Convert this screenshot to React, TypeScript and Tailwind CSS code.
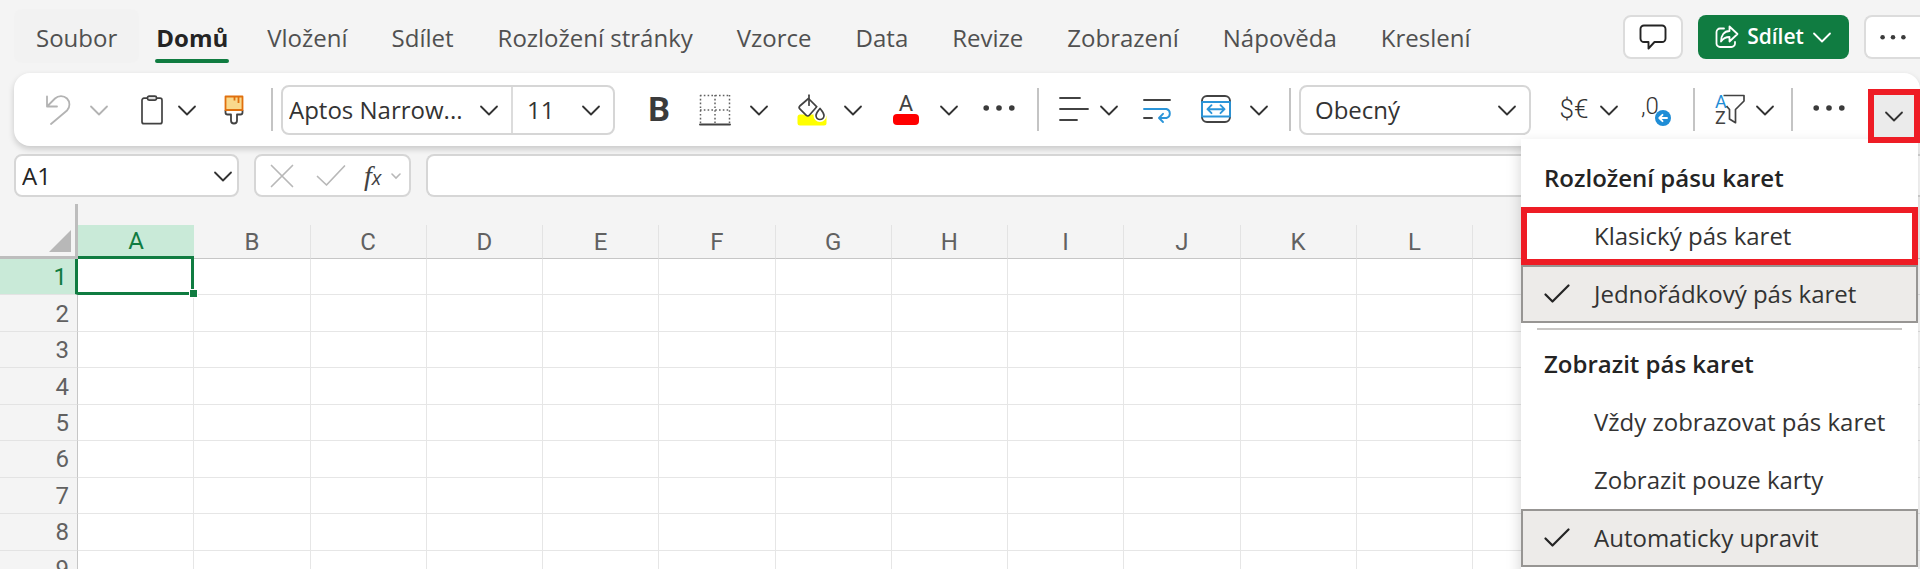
import React, { useState } from 'react';
import clsx from 'clsx';

interface IconProps {
  className?: string;
}

const tabs = [
  'Soubor',
  'Domů',
  'Vložení',
  'Sdílet',
  'Rozložení stránky',
  'Vzorce',
  'Data',
  'Revize',
  'Zobrazení',
  'Nápověda',
  'Kreslení',
];

const columns = 'ABCDEFGHIJKLMNOP'.split('');
const rows = [1, 2, 3, 4, 5, 6, 7, 8, 9];

const layoutOptions = ['Klasický pás karet', 'Jednořádkový pás karet'];
const displayOptions = ['Vždy zobrazovat pás karet', 'Zobrazit pouze karty', 'Automaticky upravit'];

function Chevron({ className = 'text-[#333333]' }: IconProps) {
  return (
    <svg viewBox="0 0 20 20" className={clsx('h-5 w-5 shrink-0', className)} fill="none" stroke="currentColor" strokeWidth="1.8" strokeLinecap="round" strokeLinejoin="round">
      <path d="M2 6.5l8 8 8-8" />
    </svg>
  );
}

function Dots({ className = 'w-8' }: IconProps) {
  return (
    <svg viewBox="0 0 32 8" className={clsx('shrink-0', className)} fill="#3b3b3b">
      <circle cx="3.2" cy="4" r="2.8" />
      <circle cx="16" cy="4" r="2.8" />
      <circle cx="28.8" cy="4" r="2.8" />
    </svg>
  );
}

function UndoIcon() {
  return (
    <svg viewBox="0 0 30 30" className="h-[30px] w-[30px]" fill="none" stroke="#b3b3b3" strokeWidth="1.8" strokeLinecap="round" strokeLinejoin="round">
      <path d="M4 1.5v10h10M4.5 11L12 3.5a8.6 8.6 0 0 1 12 0a8.6 8.6 0 0 1 0 12L8 29" />
    </svg>
  );
}

function ClipboardIcon() {
  return (
    <svg viewBox="0 0 30 30" className="h-[30px] w-[30px]" fill="none" stroke="#424242" strokeWidth="1.7" strokeLinejoin="round">
      <path d="M10.5 3.2H7a2 2 0 0 0-2 2v21.5a2 2 0 0 0 2 2h16a2 2 0 0 0 2-2V5.2a2 2 0 0 0-2-2h-3.5" />
      <rect x="10.5" y="1.2" width="9" height="4" rx="1.6" fill="#e0e0e0" />
    </svg>
  );
}

function BrushIcon() {
  return (
    <svg viewBox="0 0 30 30" className="h-[30px] w-[30px]" fill="none" strokeWidth="1.8" strokeLinejoin="round">
      <path d="M6.5 15v2.500a2 2 0 0 0 2 2H12v6a3 3 0 0 0 6 0v-6h3.500a2 2 0 0 0 2-2V15" stroke="#424242" />
      <path d="M6.5 1.500h17v13.500h-17z" fill="#f9d98c" stroke="#e0700e" />
      <path d="M15.5 1.500v4M19.500 1.500v6.500" stroke="#e0700e" />
    </svg>
  );
}

function BordersIcon() {
  return (
    <svg viewBox="0 0 32 32" className="h-8 w-8" fill="none" stroke="#616161" strokeWidth="1.5">
      <path d="M1 1.500h30M1 16h30M1.500 1v28M16 1v28M30.500 1v28" strokeDasharray="1.6 2.2" />
      <path d="M1 30.500h30" stroke="#424242" strokeWidth="1.9" strokeLinecap="round" />
    </svg>
  );
}

function FillIcon() {
  return (
    <svg viewBox="0 0 30 32" className="h-8 w-[30px]" fill="none" stroke="#424242" strokeWidth="1.7" strokeLinecap="round" strokeLinejoin="round">
      <rect x="0.5" y="20.5" width="29" height="11" rx="2.5" fill="#ffff00" stroke="none" />
      <path d="M11.500 4.500l8.300 8.300-7.500 8.500a2 2 0 0 1-3 0l-6.500-6.500a2 2 0 0 1 0-2.800z" fill="#ffffff" />
      <path d="M12 1.200v10" />
      <path d="M23 14.500c2 2.600 4 4.600 4 7a4 4 0 0 1-8 0c0-2.400 2-4.400 4-7z" fill="#ffffff" stroke="#ffffff" strokeWidth="5" />
      <path d="M23 14.500c2 2.600 4 4.600 4 7a4 4 0 0 1-8 0c0-2.400 2-4.400 4-7z" fill="#ffffff" />
    </svg>
  );
}

function AlignIcon() {
  return (
    <svg viewBox="0 0 30 30" className="h-[30px] w-[30px]" fill="none" stroke="#424242" strokeWidth="1.8" strokeLinecap="round">
      <path d="M1 3h20M1 14h28M1 25h17" />
    </svg>
  );
}

function WrapIcon() {
  return (
    <svg viewBox="0 0 30 30" className="h-[30px] w-[30px]" fill="none" stroke="#424242" strokeWidth="1.9" strokeLinecap="round" strokeLinejoin="round">
      <path d="M1 5h26M1 23h8" />
      <path d="M1 14h22.500a4.700 4.700 0 0 1 0 9H16.500M20 18.800L16 23l4 4" stroke="#2b95d9" />
    </svg>
  );
}

function MergeIcon() {
  return (
    <svg viewBox="0 0 30 30" className="h-[30px] w-[30px]" fill="none" stroke="#424242" strokeWidth="1.9" strokeLinecap="round" strokeLinejoin="round">
      <rect x="1" y="1" width="28" height="26" rx="5" />
      <path d="M1 7h28v14.500H1zM6.500 14.200h17M10.500 10.200l-4 4 4 4M19.500 10.200l4 4-4 4" stroke="#2b95d9" />
    </svg>
  );
}

function DecimalIcon() {
  return (
    <span className="flex h-8 w-8 items-start">
      <span className="font-['Roboto',sans-serif] text-2xl leading-6 font-light text-[#333333]">,0</span>
      <svg viewBox="0 0 16 16" className="-ml-1 h-4 w-4 shrink-0 self-end" fill="none" stroke="#ffffff" strokeWidth="1.9" strokeLinecap="round" strokeLinejoin="round">
        <circle cx="8" cy="8" r="8" fill="#1f8dd6" stroke="none" />
        <path d="M12 8H4.500M7.500 4.800L4.300 8l3.200 3.200" />
      </svg>
    </span>
  );
}

function SortFilterIcon() {
  return (
    <span className="flex h-8 w-[30px] items-start">
      <span className="flex w-2 flex-col font-['Roboto',sans-serif] text-lg leading-4">
        <span className="text-[#1f8dd6]">A</span>
        <span className="text-[#424242]">Z</span>
      </span>
      <svg viewBox="0 0 22 30" className="h-[30px] w-[22px] shrink-0" fill="none" stroke="#424242" strokeWidth="1.7" strokeLinejoin="round">
        <path d="M0.500 1.500h20.500v5.500l-8.500 8.500v13.200l-6-3.700v-9.500L3.500 12" />
      </svg>
    </span>
  );
}

function CommentIcon() {
  return (
    <svg viewBox="0 0 28 28" className="h-7 w-7" fill="none" stroke="#242424" strokeWidth="1.9" strokeLinejoin="round">
      <path d="M5 2.500h18a3.500 3.500 0 0 1 3.500 3.500v9.500a3.500 3.500 0 0 1-3.500 3.500h-7.500l-6 6.500v-6.500H5a3.500 3.500 0 0 1-3.500-3.500V6A3.500 3.500 0 0 1 5 2.500z" />
    </svg>
  );
}

function ShareIcon() {
  return (
    <svg viewBox="0 0 24 24" className="h-6 w-6" fill="none" stroke="#ffffff" strokeWidth="1.8" strokeLinecap="round" strokeLinejoin="round">
      <path d="M9 3.500H5A3.500 3.500 0 0 0 1.500 7v11.500A3.500 3.500 0 0 0 5 22h11.500a3.500 3.500 0 0 0 3.500-3.500V17" />
      <path d="M14.500 1.500l8 7.500-8 7.500v-4.500c-4 0-6.500 1.500-8.500 4.500 0-6 3-10.500 8.500-10.500z" />
    </svg>
  );
}

function CheckIcon() {
  return (
    <svg viewBox="0 0 26 20" className="h-5 w-[26px]" fill="none" stroke="#242424" strokeWidth="2.2" strokeLinecap="round" strokeLinejoin="round">
      <path d="M1.500 10.500l7 7L24.500 1.500" />
    </svg>
  );
}

function Divider({ className }: IconProps) {
  return <div className={clsx('h-[43px] w-0.5 shrink-0 bg-[#c4c4c4]', className)} />;
}

interface ToolProps {
  label: string;
  className?: string;
  disabled?: boolean;
  children: React.ReactNode;
}

function Tool({ label, className, disabled, children }: ToolProps) {
  return (
    <button aria-label={label} disabled={disabled} className={clsx('flex h-12 shrink-0 items-center', className)}>
      {children}
    </button>
  );
}

interface PickerProps {
  label: string;
  options: string[];
  className?: string;
  selectClassName?: string;
}

function Picker({ label, options, className, selectClassName }: PickerProps) {
  return (
    <div className={clsx('relative h-full', className)}>
      <select aria-label={label} className={clsx('h-full w-full appearance-none bg-transparent text-2xl text-[#333333]', selectClassName)}>
        {options.map((option) => (
          <option key={option}>{option}</option>
        ))}
      </select>
      <div className="pointer-events-none absolute inset-y-0 right-3 flex items-center">
        <Chevron />
      </div>
    </div>
  );
}

function TopBar() {
  const [activeTab, setActiveTab] = useState('Domů');

  return (
    <header className="flex h-[73px] items-start justify-between pl-[14px]">
      <nav className="flex pt-[9px]">
        {tabs.map((tab) => (
          <button
            key={tab}
            onClick={() => setActiveTab(tab)}
            className={clsx(
              'flex h-[54px] flex-col items-center rounded-lg pt-2 text-2xl whitespace-nowrap',
              tab === 'Soubor' && 'bg-[#f2f2f2]',
              activeTab === tab ? 'px-4 font-bold text-[#242424]' : 'px-[22px] text-[#505050]'
            )}
          >
            <span className="leading-[42px]">{tab}</span>
            {activeTab === tab && <span className="h-1 w-[74px] rounded-full bg-[#107c41]" />}
          </button>
        ))}
      </nav>

      <div className="flex shrink-0 pt-[15px]">
        <button aria-label="Komentáře" className="flex h-11 w-[60px] items-center justify-center rounded-lg border-2 border-[#dcdcdc] bg-white">
          <CommentIcon />
        </button>
        <button className="ml-[15px] flex h-11 w-[151px] items-center justify-center gap-2 rounded-lg bg-[#107c41] text-[21px] font-semibold text-white">
          <ShareIcon />
          Sdílet
          <Chevron className="text-white" />
        </button>
        <button aria-label="Další možnosti" className="ml-[15px] flex h-11 w-14 items-center justify-center rounded-l-lg border-2 border-r-0 border-[#dcdcdc] bg-white">
          <Dots className="w-[26px]" />
        </button>
      </div>
    </header>
  );
}

function Ribbon() {
  const [menuOpen, setMenuOpen] = useState(true);

  return (
    <div className="relative z-10 ml-[14px] flex h-[73px] items-center rounded-2xl bg-white pl-[29px] shadow-[0_3px_6px_rgba(0,0,0,0.18)]">
      {/* Clipboard */}
      <Tool label="Zpět" disabled className="gap-4">
        <UndoIcon />
        <Chevron className="text-[#b3b3b3]" />
      </Tool>
      <Tool label="Vložit" className="ml-7 gap-2.5">
        <ClipboardIcon />
        <Chevron />
      </Tool>
      <Tool label="Kopírovat formát" className="ml-[22px]">
        <BrushIcon />
      </Tool>
      <Divider className="ml-[22px]" />

      {/* Font */}
      <div className="ml-2 flex h-[50px] shrink-0 rounded-lg border-2 border-[#d6d6d6]">
        <Picker label="Písmo" options={['Aptos Narrow...']} className="w-[228px]" selectClassName="pl-1.5" />
        <div className="w-0.5 bg-[#dcdcdc]" />
        <Picker label="Velikost písma" options={['11']} className="w-[100px]" selectClassName="pl-3.5" />
      </div>
      <Tool label="Tučné" className="ml-[34px] w-5 justify-center font-['Roboto',sans-serif] text-[34px] font-bold text-[#3b3b3b]">
        B
      </Tool>
      <Tool label="Ohraničení" className="ml-[30px] gap-[18px]">
        <BordersIcon />
        <Chevron />
      </Tool>
      <Tool label="Barva výplně" className="ml-7 gap-4">
        <FillIcon />
        <Chevron />
      </Tool>
      <Tool label="Barva písma" className="ml-7 gap-[18px]">
        <span className="flex w-[30px] flex-col items-center">
          <span className="font-['Roboto',sans-serif] text-[22px] leading-5 text-[#424242]">A</span>
          <span className="h-[11px] w-[26px] rounded-sm bg-[#ff0000]" />
        </span>
        <Chevron />
      </Tool>
      <Tool label="Další možnosti písma" className="ml-6 pb-1">
        <Dots />
      </Tool>
      <Divider className="ml-[22px]" />

      {/* Alignment */}
      <Tool label="Zarovnání" className="ml-5 gap-2.5">
        <AlignIcon />
        <Chevron />
      </Tool>
      <Tool label="Zalamovat text" className="ml-6">
        <WrapIcon />
      </Tool>
      <Tool label="Sloučit buňky" className="ml-7 gap-[18px]">
        <MergeIcon />
        <Chevron />
      </Tool>
      <Divider className="ml-5" />

      {/* Number format */}
      <div className="ml-2 h-[50px] shrink-0 rounded-lg border-2 border-[#d6d6d6]">
        <Picker label="Formát čísla" options={['Obecný']} className="w-[228px]" selectClassName="pl-3.5" />
      </div>
      <Tool label="Účetnický formát" className="ml-[28px] gap-2.5">
        <span className="w-[30px] font-['Roboto',sans-serif] text-[26px] font-light whitespace-nowrap text-[#333333]">$€</span>
        <Chevron />
      </Tool>
      <Tool label="Odebrat desetinné místo" className="ml-[22px]">
        <DecimalIcon />
      </Tool>
      <Divider className="ml-5" />
      <Tool label="Seřadit a filtrovat" className="ml-5 gap-2.5">
        <SortFilterIcon />
        <Chevron />
      </Tool>
      <Divider className="ml-4" />
      <Tool label="Další příkazy" className="ml-5 pb-1">
        <Dots />
      </Tool>

      {/* Ribbon options */}
      <button
        aria-label="Možnosti pásu karet"
        aria-expanded={menuOpen}
        onClick={() => setMenuOpen(!menuOpen)}
        className="relative z-30 mt-3 ml-auto flex h-[54px] w-[52px] shrink-0 items-center justify-center border-[6px] border-[#ee1c25] bg-[#ebebeb]"
      >
        <Chevron />
      </button>
      {menuOpen && <RibbonMenu />}
    </div>
  );
}

interface MenuGroupProps {
  title: string;
  options: string[];
  selected: string;
  highlighted?: string;
  onSelect: (option: string) => void;
}

function MenuGroup({ title, options, selected, highlighted, onSelect }: MenuGroupProps) {
  return (
    <div role="group" aria-label={title}>
      <h2 className="pl-[23px] text-2xl leading-[58px] font-semibold text-[#242424]">{title}</h2>
      {options.map((option) => (
        <button
          key={option}
          role="menuitemradio"
          aria-checked={selected === option}
          onClick={() => onSelect(option)}
          className={clsx(
            'flex h-[58px] w-full items-center text-2xl whitespace-nowrap text-[#333333]',
            option === highlighted && 'border-[6px] border-[#ee1c25] pl-[17px]',
            option !== highlighted && selected === option && 'border-2 border-[#979593] bg-[#edebe9] pl-[21px]',
            option !== highlighted && selected !== option && 'pl-[23px]'
          )}
        >
          <span className="w-[50px] shrink-0">{selected === option && <CheckIcon />}</span>
          {option}
        </button>
      ))}
    </div>
  );
}

function RibbonMenu() {
  const [layout, setLayout] = useState('Jednořádkový pás karet');
  const [display, setDisplay] = useState('Automaticky upravit');

  return (
    <div role="menu" className="absolute top-[66px] right-[2px] z-20 w-[397px] bg-white pt-[10px] pb-2 shadow-[0_6px_14px_rgba(0,0,0,0.18)]">
      <MenuGroup title="Rozložení pásu karet" options={layoutOptions} selected={layout} highlighted="Klasický pás karet" onSelect={setLayout} />
      <div className="mx-4 my-[5px] h-0.5 bg-[#c8c6c4]" />
      <MenuGroup title="Zobrazit pás karet" options={displayOptions} selected={display} onSelect={setDisplay} />
    </div>
  );
}

function FormulaBar() {
  return (
    <div className="flex h-[58px] items-start pt-2 pl-[14px]">
      <div className="relative h-[43px] w-[225px] shrink-0 rounded-lg border-2 border-[#d6d6d6] bg-white">
        <input aria-label="Pole názvů" defaultValue="A1" className="h-full w-full rounded-lg pl-1.5 text-2xl text-[#242424] outline-none" />
        <div className="pointer-events-none absolute inset-y-0 right-1 flex items-center">
          <Chevron />
        </div>
      </div>

      <div className="ml-[15px] flex h-[43px] w-[157px] shrink-0 items-center rounded-lg border-2 border-[#d6d6d6] bg-white pl-3.5">
        <button aria-label="Zrušit" disabled>
          <svg viewBox="0 0 24 24" className="h-6 w-6" fill="none" stroke="#b8b8b8" strokeWidth="1.7" strokeLinecap="round">
            <path d="M1.500 1.500l21 21M22.500 1.500l-21 21" />
          </svg>
        </button>
        <button aria-label="Zadat" disabled className="ml-[22px]">
          <svg viewBox="0 0 30 24" className="h-6 w-[30px]" fill="none" stroke="#b8b8b8" strokeWidth="1.7" strokeLinecap="round" strokeLinejoin="round">
            <path d="M1.500 12.500l9 8.500L28.500 2" />
          </svg>
        </button>
        <button aria-label="Vložit funkci" className="ml-[18px] flex items-center gap-2.5 text-[#424242] italic">
          <span className="font-['Liberation_Serif',serif] text-[28px] leading-8">
            f<span className="font-['Open_Sans',sans-serif] text-xl">x</span>
          </span>
          <svg viewBox="0 0 10 10" className="h-2.5 w-2.5" fill="none" stroke="#b8b8b8" strokeWidth="1.6" strokeLinecap="round">
            <path d="M1 3l4 4 4-4" />
          </svg>
        </button>
      </div>

      <input aria-label="Řádek vzorců" className="ml-[15px] h-[43px] flex-1 rounded-l-lg border-2 border-r-0 border-[#d6d6d6] bg-white px-3 text-2xl outline-none" />
    </div>
  );
}

function Sheet() {
  return (
    <div className="flex-1 overflow-hidden">
      <table className="h-[383px] w-full min-w-[1938px] table-fixed border-separate border-spacing-0 font-['Roboto',sans-serif] text-2xl text-[#616161]">
        <colgroup>
          <col className="w-[78px]" />
        </colgroup>
        <thead>
          <tr className="h-[21px]">
            <td className="border-r-[3px] border-[#bdbdbd]" />
          </tr>
          <tr className="h-[34px]">
            <td className="border-r-[3px] border-b-[3px] border-[#bdbdbd] p-0">
              <button aria-label="Vybrat vše" className="ml-auto block pr-1">
                <svg viewBox="0 0 22 22" className="h-[22px] w-[22px]">
                  <path d="M22 0v22H0z" fill="#b8b8b8" />
                </svg>
              </button>
            </td>
            {columns.map((column) => (
              <th
                key={column}
                scope="col"
                className={clsx(
                  'p-0 leading-[30px] font-normal',
                  column === 'A' ? 'border-b-[3px] border-[#107c41] bg-[#c9ead8] text-[#107c41]' : 'border-r border-b border-r-[#e3e3e3] border-b-[#c6c6c6]'
                )}
              >
                {column}
              </th>
            ))}
          </tr>
        </thead>
        <tbody>
          {rows.map((row) => (
            <tr key={row}>
              <th
                scope="row"
                className={clsx(
                  'border-b border-b-[#e3e3e3] p-0 pt-0.5 pr-2 text-right leading-[33px] font-normal',
                  row === 1 ? 'border-r-[3px] border-r-[#107c41] bg-[#c9ead8] text-[#107c41]' : 'border-r border-r-[#c6c6c6]'
                )}
              >
                {row}
              </th>
              {columns.map((column) => {
                const isActive = row === 1 && column === 'A';

                return (
                  <td
                    key={column}
                    className={clsx('relative bg-white p-0', isActive ? 'border-r-[3px] border-b-[3px] border-[#107c41]' : 'border-r border-b border-[#e6e6e6]')}
                  >
                    {isActive && <span className="absolute -right-[7px] -bottom-[6px] z-10 h-[9px] w-[9px] border border-white bg-[#107c41]" />}
                  </td>
                );
              })}
            </tr>
          ))}
        </tbody>
      </table>
    </div>
  );
}

export default function App() {
  return (
    <div className="flex h-screen flex-col overflow-hidden bg-[#f4f4f4] font-['Open_Sans',sans-serif]">
      <TopBar />
      <Ribbon />
      <FormulaBar />
      <Sheet />
    </div>
  );
}
